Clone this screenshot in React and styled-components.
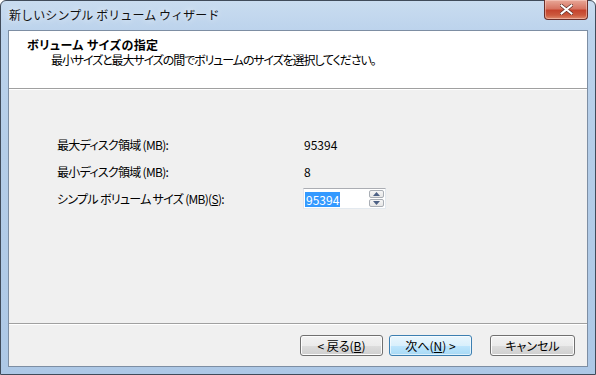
import React from "react";
import styled, { createGlobalStyle } from "styled-components";

const Global = createGlobalStyle`
  html, body { margin: 0; padding: 0; background: #ffffff; }
  body { width: 596px; height: 375px; overflow: hidden; }
  * { box-sizing: border-box; }
`;

const font = `"Noto Sans CJK JP", "Noto Sans", sans-serif`;

const Window = styled.div`
  position: relative;
  width: 596px;
  height: 375px;
  border: 1px solid #404b5a;
  border-radius: 6px 6px 0 0;
  background: linear-gradient(180deg, #c9dcf0 0%, #bcd3ec 8%, #b4cde8 40%, #adc8e6 100%);
  display: flex;
  flex-direction: column;
  padding: 0 7px 7px 7px;
  font-family: ${font};
  font-size: 12px;
  color: #000;
`;

const TitleBar = styled.div`
  height: 29px;
  display: flex;
  align-items: center;
  padding-left: 1px;
  padding-bottom: 3px;
`;

const TitleText = styled.span`
  font-size: 12px;
  color: #101010;
  letter-spacing: 0.1px;
  text-shadow: 0 0 6px rgba(255, 255, 255, 0.9);
`;

const CloseButton = styled.div`
  position: absolute;
  top: -1px;
  right: 7px;
  width: 44px;
  height: 20px;
  border: 1px solid #6a2f2a;
  border-top: none;
  border-radius: 0 0 4px 4px;
  background: linear-gradient(180deg, #e8a898 0%, #d77563 45%, #c5442d 55%, #cc5a3e 80%, #e08a6c 100%);
  box-shadow: inset 0 0 0 1px rgba(255, 220, 210, 0.45);
  display: flex;
  align-items: center;
  justify-content: center;
`;

const Client = styled.div`
  flex: 1;
  display: flex;
  flex-direction: column;
  border: 1px solid #7d8ea3;
  background: #f0f0f0;
  font-feature-settings: "palt";
`;

const Header = styled.div`
  height: 58px;
  background: #ffffff;
  border-bottom: 1px solid #a0a0a0;
  padding: 6px 0 0 18px;
`;

const HeaderTitle = styled.div`
  font-weight: bold;
  font-size: 12px;
  line-height: 15px;
  letter-spacing: 0.4px;
`;

const HeaderSub = styled.div`
  padding-left: 24px;
  font-size: 12px;
  line-height: 15px;
  letter-spacing: -1.1px;
`;

const Body = styled.div`
  flex: 1;
  border-top: 1px solid #ffffff;
  padding: 41px 0 0 48px;
  display: grid;
  grid-template-columns: 246px 100px;
  grid-auto-rows: 27px;
  align-items: center;
  align-content: start;
`;

const Label = styled.div`
  font-size: 12px;
  letter-spacing: -0.7px;
`;

const Value = styled.div`
  font-size: 12px;
  padding-left: 1px;
`;

const SpinBox = styled.div`
  display: flex;
  align-items: center;
  height: 21px;
`;

const Field = styled.div`
  width: 66px;
  height: 21px;
  border: 1px solid #abadb3;
  border-right: none;
  border-bottom-color: #e3e9ef;
  border-left-color: #e2e3ea;
  background: #fff;
  padding: 2px 0 0 1px;
`;

const Selected = styled.span`
  background: #3399ff;
  color: #fff;
  font-size: 12px;
  line-height: 15px;
  display: inline-block;
  padding: 0 1px;
`;

const SpinCol = styled.div`
  width: 17px;
  height: 21px;
  border: 1px solid #e3e9ef;
  border-top-color: #abadb3;
  border-left: none;
  background: #fff;
  display: flex;
  flex-direction: column;
  justify-content: center;
  gap: 1px;
  padding: 1px 1px 1px 0;
`;

const SpinButton = styled.div`
  flex: 1;
  border: 1px solid #a9aeb5;
  border-radius: 2px;
  background: linear-gradient(180deg, #f6f6f6 0%, #e6e6e6 100%);
  display: flex;
  align-items: center;
  justify-content: center;
`;

const Footer = styled.div`
  height: 43px;
  border-top: 1px solid #a0a0a0;
  box-shadow: inset 0 1px 0 #ffffff;
  display: flex;
  align-items: center;
  justify-content: flex-end;
  padding-right: 12px;
`;

const Button = styled.div`
  width: ${(p) => p.$w || 83}px;
  height: 21px;
  margin-left: ${(p) => p.$gap || 0}px;
  border: 1px solid ${(p) => (p.$primary ? "#3c7fb1" : "#707070")};
  border-radius: 3px;
  background: ${(p) =>
    p.$primary
      ? "linear-gradient(180deg, #eaf6fd 0%, #d9f0fc 50%, #bee6fd 51%, #a7d9f5 100%)"
      : "linear-gradient(180deg, #f2f2f2 0%, #ebebeb 50%, #dddddd 51%, #cfcfcf 100%)"};
  box-shadow: inset 0 0 0 1px ${(p) => (p.$primary ? "rgba(255,255,255,0.6)" : "#fcfcfc")};
  display: flex;
  align-items: center;
  justify-content: center;
  font-size: 12px;
  line-height: 15px;
  padding-top: 1px;
  white-space: pre;
`;

const U = styled.span`
  text-decoration: underline;
`;

const Triangle = ({ up }) => (
  <svg width="7" height="4" viewBox="0 0 7 4">
    <path d={up ? "M0 4 L3.5 0 L7 4 Z" : "M0 0 L3.5 4 L7 0 Z"} fill="#4d6185" />
  </svg>
);

export default function App() {
  return (
    <>
      <Global />
      <Window>
        <TitleBar>
          <TitleText>新しいシンプル ボリューム ウィザード</TitleText>
        </TitleBar>
        <CloseButton>
          <svg width="13" height="11" viewBox="0 0 13 11">
            <path
              d="M1.5 1.5 L11.5 9.5 M11.5 1.5 L1.5 9.5"
              stroke="#5a2a22"
              strokeWidth="3.4"
              strokeLinecap="square"
            />
            <path
              d="M1.5 1.5 L11.5 9.5 M11.5 1.5 L1.5 9.5"
              stroke="#ffffff"
              strokeWidth="2"
              strokeLinecap="square"
            />
          </svg>
        </CloseButton>
        <Client>
          <Header>
            <HeaderTitle>ボリューム サイズの指定</HeaderTitle>
            <HeaderSub>最小サイズと最大サイズの間でボリュームのサイズを選択してください。</HeaderSub>
          </Header>
          <Body>
            <Label>最大ディスク領域 (MB):</Label>
            <Value>95394</Value>
            <Label>最小ディスク領域 (MB):</Label>
            <Value>8</Value>
            <Label>
              シンプル ボリューム サイズ (MB)(<U>S</U>):
            </Label>
            <SpinBox>
              <Field>
                <Selected>95394</Selected>
              </Field>
              <SpinCol>
                <SpinButton>
                  <Triangle up />
                </SpinButton>
                <SpinButton>
                  <Triangle />
                </SpinButton>
              </SpinCol>
            </SpinBox>
          </Body>
          <Footer>
            <Button>
              {"< 戻る("}<U>B</U>{")"}
            </Button>
            <Button $primary $gap={6}>
              {"次へ("}<U>N</U>{") >"}
            </Button>
            <Button $gap={18} $w={85}>
              キャンセル
            </Button>
          </Footer>
        </Client>
      </Window>
    </>
  );
}
